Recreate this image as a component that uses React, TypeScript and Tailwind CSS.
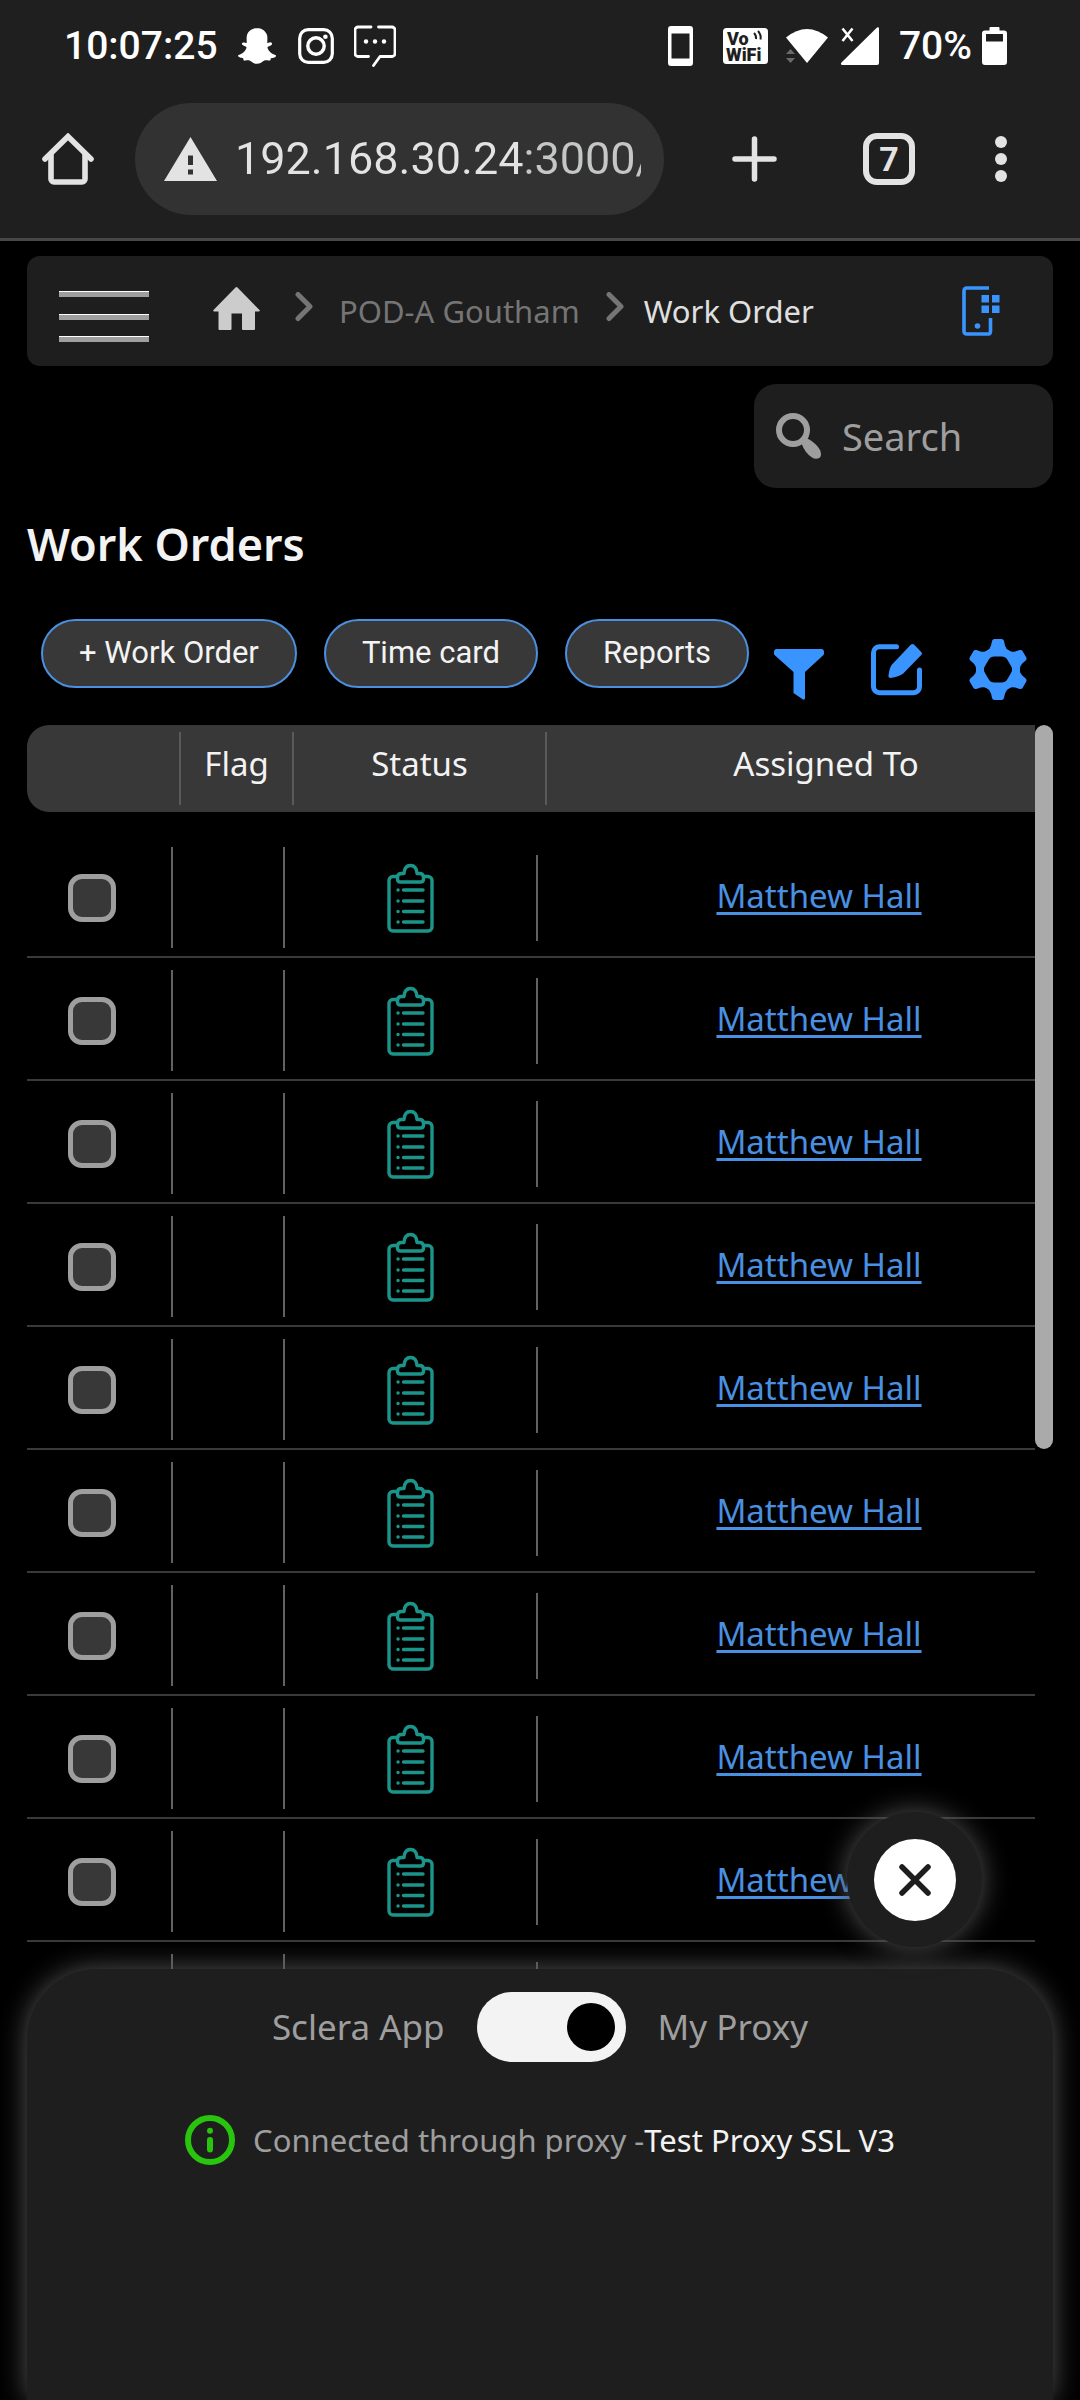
import { useState } from "react";
import { FaSnapchatGhost } from "react-icons/fa";

const BLUE = "#3a94ff";

function StatusBar() {
  return (
    <div className="flex h-[92px] items-center justify-between pl-16 pr-[73px] font-medium text-white">
      <div className="flex items-center">
        <time className="text-[39px] leading-none">10:07:25</time>
        <FaSnapchatGhost className="ml-5" size={38} aria-label="Snapchat" />
        <svg className="ml-[22px]" width="36" height="36" viewBox="0 0 36 36" fill="none" stroke="currentColor">
          <rect x="1.7" y="1.7" width="32.6" height="32.6" rx="8.5" strokeWidth="3.2" />
          <circle cx="18" cy="18" r="8.2" strokeWidth="3.4" />
          <circle cx="27.4" cy="8.8" r="2.3" fill="currentColor" stroke="none" />
        </svg>
        <svg className="ml-5" width="42" height="42" viewBox="0 0 42 42" fill="none" stroke="currentColor" strokeWidth="2.8" strokeLinecap="round" strokeLinejoin="round">
          <path d="M17 2H4a3 3 0 0 0-3 3v23.500a3 3 0 0 0 3 3h10.500M24.500 2H38a3 3 0 0 1 3 3v23.500a3 3 0 0 1-3 3H26L19.500 40.500" />
          <g fill="currentColor" stroke="none">
            <circle cx="12" cy="16.500" r="2.200" />
            <circle cx="21" cy="16.500" r="2.200" />
            <circle cx="30" cy="16.500" r="2.200" />
          </g>
        </svg>
      </div>
      <div className="flex items-center">
        <svg width="25" height="40" viewBox="0 0 25 40">
          <path fill="currentColor" fillRule="evenodd" d="M3 0h19a3 3 0 0 1 3 3v34a3 3 0 0 1-3 3H3a3 3 0 0 1-3-3V3a3 3 0 0 1 3-3zM3.500 7.500v25h18v-25z" />
        </svg>
        <svg className="ml-[30px]" width="45" height="36" viewBox="0 0 45 36">
          <rect width="45" height="36" rx="3.500" fill="currentColor" />
          <g fill="#1f1f1f" fontFamily="Roboto, sans-serif" fontWeight="900" fontSize="18">
            <text x="4" y="16.500">Vo</text>
            <text x="3" y="32.500">WiFi</text>
          </g>
          <path d="M31 5q2.500 2.500 2 6M35 3q3.500 4 2.500 8.500" fill="none" stroke="#1f1f1f" strokeWidth="2" />
        </svg>
        <svg className="ml-[18px]" width="42" height="36" viewBox="0 0 42 36">
          <path d="M0 9.500Q21-7.500 42 9.500L21 35z" fill="currentColor" />
          <path d="M0 26l4.500-5 4.500 5zM0 30h9l-4.500 5z" fill="#6a6a6a" />
        </svg>
        <svg className="ml-[13px]" width="38" height="38" viewBox="0 0 38 38">
          <path d="M36 .6q2-1 2 1V36a2 2 0 0 1-2 2H1.500q-2.500-.5-1-2.500z" fill="currentColor" />
          <path d="M1.500 1.500l10 12.500M11.500 1.500l-10 12.500" stroke="currentColor" strokeWidth="2.600" />
        </svg>
        <span className="ml-5 text-[39px] leading-none">70%</span>
        <svg className="ml-[10px]" width="25" height="38" viewBox="0 0 25 38">
          <path fill="currentColor" fillRule="evenodd" d="M8.500 0h8a1 1 0 0 1 1 1v2.500H22a3 3 0 0 1 3 3V35a3 3 0 0 1-3 3H3a3 3 0 0 1-3-3V6.500a3 3 0 0 1 3-3h4.500V1a1 1 0 0 1 1-1zM4 7v7.500h17V7z" />
        </svg>
      </div>
    </div>
  );
}

function BrowserToolbar() {
  return (
    <div className="mt-[11px] mb-[23px] flex items-center pl-[42px] pr-[73px] text-[#e3e3e3]">
      <button aria-label="Home">
        <svg width="52" height="52" viewBox="0 0 52 52" fill="none" stroke="currentColor" strokeWidth="5.600" strokeLinejoin="round" strokeLinecap="round">
          <path d="M9 22V46a3 3 0 0 0 3 3h28a3 3 0 0 0 3-3V22" />
          <path d="M3 26L26 3.500 49 26" strokeLinejoin="miter" />
        </svg>
      </button>
      <div className="ml-[41px] flex h-28 min-w-0 flex-1 items-center rounded-full bg-[#323232] pl-[29px] pr-[23px]">
        <svg className="shrink-0" width="53" height="44" viewBox="0 0 53 44">
          <path fill="currentColor" fillRule="evenodd" d="M26.500 0L53 44H0zM24 18.500v9.500h5v-9.500zM24 32.500v5h5v-5z" />
        </svg>
        <input
          aria-label="Address"
          readOnly
          defaultValue="192.168.30.24:3000/"
          className="ml-[18px] w-full min-w-0 bg-[linear-gradient(to_right,#e3e3e3_291px,#c4c7c5_291px)] bg-clip-text text-[45px] leading-[60px] text-transparent outline-none"
        />
      </div>
      <button className="ml-[68px]" aria-label="New tab">
        <svg width="45" height="46" viewBox="0 0 45 46" stroke="currentColor" strokeWidth="5.500" strokeLinecap="round">
          <path d="M22.500 3v40M3 23h39" />
        </svg>
      </button>
      <button className="ml-[86px] flex size-[52px] items-center justify-center rounded-[14px] border-[6px] border-[#e3e3e3] text-[34px] font-bold leading-none" aria-label="Open tabs">
        7
      </button>
      <button className="ml-20" aria-label="Menu">
        <svg width="12" height="48" viewBox="0 0 12 48" fill="currentColor">
          <circle cx="6" cy="7" r="6" />
          <circle cx="6" cy="24" r="6" />
          <circle cx="6" cy="41" r="6" />
        </svg>
      </button>
    </div>
  );
}

function Chevron() {
  return (
    <svg width="18" height="39" viewBox="0 0 18 39" fill="none" stroke="#757575" strokeWidth="5" strokeLinecap="round" strokeLinejoin="round" aria-hidden="true">
      <path d="M3 2.500L15 14.500 3 26.500" />
    </svg>
  );
}

function Breadcrumbs() {
  return (
    <header className="flex h-[110px] items-center rounded-[13px] bg-[#1e1e1e] pl-8 pr-[53px] text-[31px]">
      <button aria-label="Open navigation">
        <svg width="90" height="62" viewBox="0 0 90 62">
          <path fill="#9e9e9e" d="M0 11h90v6H0zM0 34h90v6H0zM0 56h90v6H0z" />
          <path fill="#fff" d="M0 11h90v1H0zM0 34h90v1H0zM0 56h90v1H0z" />
        </svg>
      </button>
      <nav className="ml-16 flex items-center" aria-label="Breadcrumb">
        <a href="#home" aria-label="Home" className="mr-[35px]">
          <svg width="47" height="48" viewBox="0 0 47 48" fill="#ccc">
            <path d="M22.500.5q1-1 2 0L46.500 23q1 1.500-1 1.500H42V42q0 1-1 1H30q-1 0-1-1V26.500H18.500V42q0 1-1 1h-11q-1 0-1-1V24.500H1.500q-2 0-1-1.500z" />
          </svg>
        </a>
        <Chevron />
        <a href="#pod" className="mx-[26px] text-[#757575]">POD-A Goutham</a>
        <Chevron />
        <a href="#work-order" aria-current="page" className="ml-5 text-[#e0e0e0]">Work Order</a>
      </nav>
      <button className="ml-auto" aria-label="Device apps">
        <svg width="38" height="50" viewBox="0 0 38 50" fill="none" stroke={BLUE} strokeWidth="3.600">
          <path d="M27 2H5Q2 2 2 5v40q0 3 3 3h21.500q2 0 2-3V32" />
          <path fill={BLUE} stroke="none" d="M19.500 9h7.500v7.500h-7.500zM30 9h7.500v7.500H30zM19.500 19.500h7.500V27h-7.500zM30 19.500h7.500V27H30z" />
          <circle cx="15.500" cy="40" r="2.800" fill={BLUE} stroke="none" />
        </svg>
      </button>
    </header>
  );
}

function SearchBox() {
  return (
    <label className="mt-[18px] flex h-[104px] w-[299px] items-center self-end rounded-[22px] bg-[#1e1e1e] pl-[22px] pr-6">
      <svg className="shrink-0" width="46" height="46" viewBox="0 0 46 46" fill="none">
        <circle cx="17" cy="17" r="14" stroke="#9e9e9e" strokeWidth="6" />
        <path fill="#9e9e9e" d="M25.500 30.500q2.500-3.500 6-5Q40 30 44 37q2 4.500 0 7.500-4 2.500-8 0Q29 40 25.500 30.500z" />
      </svg>
      <input type="search" aria-label="Search" placeholder="Search" className="ml-5 w-full min-w-0 bg-transparent text-[38px] text-[#e0e0e0] outline-none placeholder:text-[#9e9e9e]" />
    </label>
  );
}

function PillButton({ children }: { children: string }) {
  return (
    <button className="h-[69px] whitespace-nowrap rounded-full border-2 border-[#4a8fe0] bg-[#383838] px-9 font-[Roboto,sans-serif] text-[31px] text-[#f3f3f3]">
      {children}
    </button>
  );
}

function Actions() {
  return (
    <div className="mt-[45px] flex items-end justify-between pl-[14px] pr-[26px]">
      <div className="flex gap-[27px] pb-3">
        <PillButton>+ Work Order</PillButton>
        <PillButton>Time card</PillButton>
        <PillButton>Reports</PillButton>
      </div>
      <div className="flex gap-[47px]">
        <button aria-label="Filter">
          <svg width="50" height="61" viewBox="0 0 50 61" fill={BLUE}>
            <path d="M2 10h46q2 .5 2 2.500v2q0 1-.8 1.800L31 33v26.500q-.5 1.500-2 1L19.500 54V33L.8 16.300Q0 15.500 0 14.500v-2Q0 10.500 2 10z" />
          </svg>
        </button>
        <button aria-label="Edit">
          <svg width="51" height="61" viewBox="0 0 51 61" fill="none">
            <path d="M25.500 7.800H8.500a6 6 0 0 0-6 6v34a6 6 0 0 0 6 6h34a6 6 0 0 0 6-6V31" stroke={BLUE} strokeWidth="5" strokeLinecap="round" />
            <path fill={BLUE} d="M40 5.600q1.500-1.200 3 0l7.200 7.500q1.500 1.500 0 3L32 34.800Q28 37.500 19.500 39q-2.500 0-2-2.500Q18.500 28.500 21 25.500z" />
          </svg>
        </button>
        <button aria-label="Settings">
          <svg width="58" height="61" viewBox="-29 -30.500 58 61">
            <circle r="18" fill="none" stroke={BLUE} strokeWidth="8" />
            {[0, 60, 120, 180, 240, 300].map((angle) => (
              <path key={angle} transform={`rotate(${angle})`} fill={BLUE} d="M-11-18.500Q-8-20.500-7-24L-6-28.500Q-5.500-30.500-3.500-30.500H3.500Q5.500-30.500 6-28.500L7-24Q8-20.500 11-18.500L7-13H-7z" />
            ))}
          </svg>
        </button>
      </div>
    </div>
  );
}

function ClipboardIcon() {
  return (
    <svg width="47" height="70" viewBox="0 0 47 70" fill="none" stroke="#1b958a" strokeWidth="3.400" strokeLinecap="round" strokeLinejoin="round" role="img" aria-label="Open">
      <path d="M10 13.500H6a4 4 0 0 0-4 4V64a4 4 0 0 0 4 4h35a4 4 0 0 0 4-4V17.500a4 4 0 0 0-4-4h-4" />
      <path d="M10.500 14.500q0-4 4-4h2.500Q17.500 2.500 23.500 2.500T30 10.500h2.500q4 0 4 4v1.500q0 3-3 3h-20q-3 0-3-3z" />
      <path d="M16.500 27H36M16.500 38H36M16.500 48.500H36M16.500 59H36M11 27h.1M11 38h.1M11 48.500h.1M11 59h.1" />
    </svg>
  );
}

const orders = Array.from({ length: 10 }, (_, i) => ({ id: i + 1, assignee: "Matthew Hall" }));

function WorkOrderTable() {
  return (
    <div className="mt-[25px] flex min-h-0 flex-1 overflow-hidden">
      <table className="block min-w-0 flex-1 text-[33px]">
        <thead className="block">
          <tr className="grid h-[87px] grid-cols-[154px_113px_253px_1fr] rounded-l-[22px] bg-[#383838] py-[7px] text-[#f3f3f3]">
            <th className="border-r-2 border-[#5a5a5a]" aria-label="Select" />
            <th className="border-r-2 border-[#5a5a5a] font-normal leading-[64px]">Flag</th>
            <th className="border-r-2 border-[#5a5a5a] font-normal leading-[64px]">Status</th>
            <th className="pl-[70px] font-normal leading-[64px]">Assigned To</th>
          </tr>
        </thead>
        <tbody className="block pt-[23px]">
          {orders.map((order) => (
            <tr key={order.id} className="grid h-[123px] grid-cols-[146px_112px_253px_1fr] border-b-2 border-[#3a3a3a]">
              <td className="mb-2 mt-3 flex items-center justify-center border-r-2 border-[#616161] pr-[14px]">
                <input type="checkbox" aria-label={`Select work order ${order.id}`} className="size-12 appearance-none rounded-[14px] border-[5px] border-[#9e9e9e] bg-[#383838] checked:bg-[#3a94ff]" />
              </td>
              <td className="mb-2 mt-3 border-r-2 border-[#616161]" />
              <td className="mb-[15px] mt-5 flex items-center justify-center border-r-2 border-[#616161]">
                <ClipboardIcon />
              </td>
              <td className="flex items-center justify-center pl-[65px]">
                <a href="#assignee" className="text-[#4a90e2] underline decoration-[3px] underline-offset-4">{order.assignee}</a>
              </td>
            </tr>
          ))}
        </tbody>
      </table>
      <div className="h-[724px] w-[18px] shrink-0 rounded-full bg-[#aaa]" />
    </div>
  );
}

function ProxySheet() {
  const [proxy, setProxy] = useState(true);
  return (
    <aside className="absolute inset-x-[27px] bottom-0 rounded-t-[70px] bg-[#1e1e1e] pb-[234px] pt-[23px] text-[#9e9e9e] shadow-[0_0_28px_#555]">
      <button aria-label="Close" className="absolute -top-[157px] right-[71px] flex size-[135px] items-center justify-center rounded-full bg-[#1e1e1e] shadow-[0_0_28px_#555]">
        <span className="flex size-[82px] items-center justify-center rounded-full bg-white">
          <svg width="32" height="32" viewBox="0 0 32 32" stroke="#1e1e1e" strokeWidth="5.500" strokeLinecap="round">
            <path d="M3 3l26 26M29 3L3 29" />
          </svg>
        </span>
      </button>
      <label className="flex items-center justify-center gap-8 text-[35px]">
        <span>Sclera App</span>
        <input
          type="checkbox"
          role="switch"
          aria-label="Use My Proxy"
          checked={proxy}
          onChange={(e) => setProxy(e.target.checked)}
          className="flex h-[70px] w-[149px] appearance-none items-center rounded-full bg-[#f3f3f3] px-[11px] before:size-12 before:rounded-full before:bg-black before:content-[''] checked:justify-end"
        />
        <span>My Proxy</span>
      </label>
      <p className="mt-[52px] flex items-center justify-center text-[31px] leading-[52px]">
        <svg className="mr-[18px]" width="50" height="50" viewBox="0 0 50 50" fill="none" stroke="#28c40e" strokeWidth="6" strokeLinecap="round">
          <circle cx="25" cy="25" r="22" />
          <path d="M25 25v9.500" />
          <circle cx="25" cy="15.800" r="3" fill="#28c40e" stroke="none" />
        </svg>
        Connected through proxy -<span className="text-[#f3f3f3]">Test Proxy SSL V3</span>
      </p>
    </aside>
  );
}

export default function App() {
  return (
    <div className="relative flex h-screen flex-col overflow-hidden bg-black font-['Noto_Sans',sans-serif]">
      <div className="border-b-[3px] border-[#484848] bg-[#1f1f1f] font-[Roboto,sans-serif]">
        <StatusBar />
        <BrowserToolbar />
      </div>
      <main className="flex min-h-0 flex-1 flex-col px-[27px] pt-[15px]">
        <Breadcrumbs />
        <SearchBox />
        <h1 className="mt-[26px] text-[45px] font-semibold leading-[60px] text-[#f3f3f3]">Work Orders</h1>
        <Actions />
        <WorkOrderTable />
      </main>
      <ProxySheet />
    </div>
  );
}
